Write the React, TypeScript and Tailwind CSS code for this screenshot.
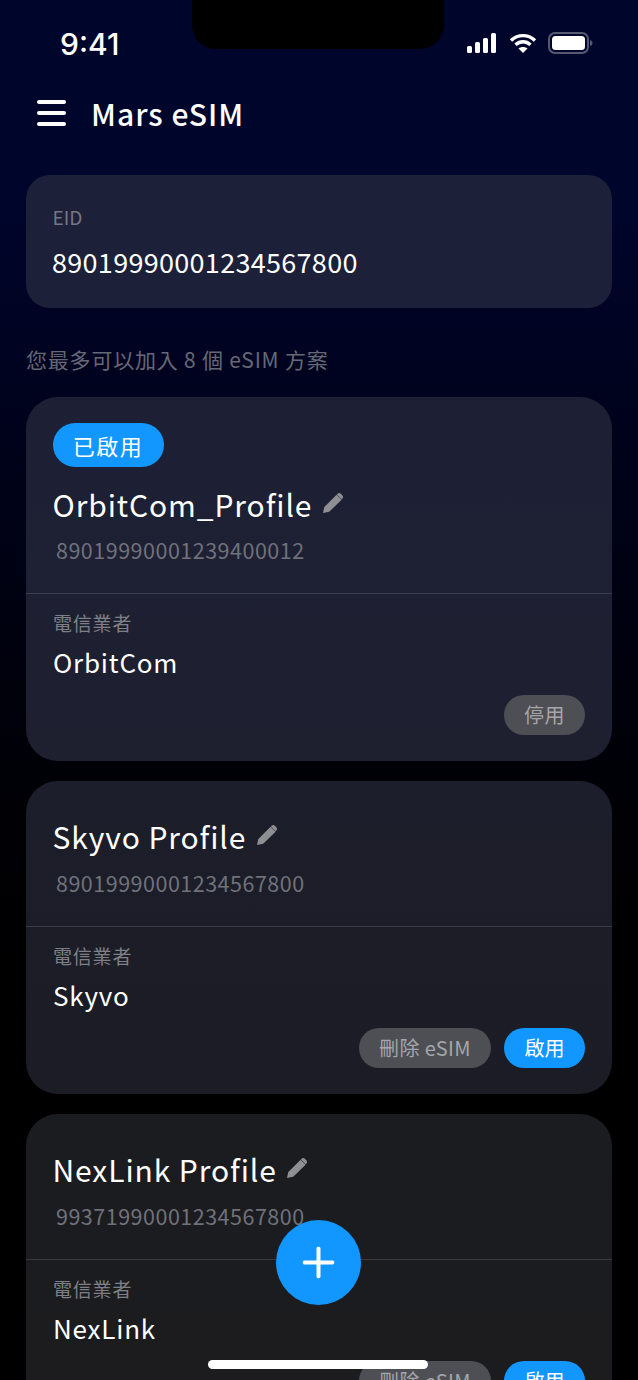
const font = { fontFamily: '"Noto Sans CJK TC", "Noto Sans", sans-serif' };

function Pencil() {
  return (
    <svg width="22" height="22" viewBox="0 0 22 22" className="shrink-0 -translate-y-[1px]">
      <path d="M1 21l1.300-6L14.600 2.700l5 5L7.200 19.800 1 21z" fill="#8e8e93" />
      <path d="M15.800 1.600c.8-.8 2-.8 2.800 0l1.900 1.900c.8.8.8 2 0 2.800l-.9.9-4.700-4.700.9-.9z" fill="#8e8e93" />
    </svg>
  );
}

function Card({ name, number, carrier, badge, buttons, tone }: { name: string; number: string; carrier: string; badge?: boolean; buttons: React.ReactNode; tone: string }) {
  return (
    <section className={`rounded-[32px] bg-gradient-to-b ${tone}`}>
      <div className={`px-[27px] pb-[27px] ${badge ? "pt-[26px]" : "pt-[33px]"}`}>
        {badge && (
          <div className="-ml-[0.500px] mb-[15px] flex h-[44px] w-[111px] items-center justify-center rounded-full bg-[#1296ff] text-[22px] tracking-[1.500px] text-white">已啟用</div>
        )}
        <div className="flex h-[44px] items-center gap-[9px]">
          <span className="-translate-x-[0.500px] text-[30px] leading-[44px] tracking-[0.900px] text-white">{name}</span>
          <Pencil />
        </div>
        <div className={`${badge ? "mt-[8px]" : "mt-[9px]"} pl-[3px] text-[21.500px] leading-[32px] tracking-[0.500px] text-[#70717a]`}>{number}</div>
      </div>
      <div className="h-px bg-white/[0.13]" />
      <div className="px-[27px] pt-[15px] pb-[26px]">
        <div className="text-[19px] leading-[28px] tracking-[0.800px] text-[#7f8087]">電信業者</div>
        <div className="mt-[5px] text-[26px] leading-[40px] tracking-[0.800px] text-white">{carrier}</div>
        <div className="mt-[13px] flex h-[40px] justify-end gap-[13px]">{buttons}</div>
      </div>
    </section>
  );
}

function Gray({ children, w }: { children: React.ReactNode; w: string }) {
  return <button className={`flex h-[40px] ${w} items-center justify-center rounded-full bg-[#4e4f54] text-[20px] tracking-[0.400px] text-[#a5a6aa]`}>{children}</button>;
}
function Blue() {
  return <button className="flex h-[40px] w-[81px] items-center justify-center rounded-full bg-[#1296ff] text-[20px] text-white">啟用</button>;
}

export default function App() {
  return (
    <div style={font} className="relative h-[1380px] w-[638px] overflow-hidden bg-gradient-to-b from-[#00052b] from-[15%] to-black to-[88%]">
      <div className="absolute left-[192px] top-0 h-[49px] w-[252px] rounded-b-[24px] bg-black" />
      <header className="flex h-[88px] items-end justify-between pb-[26px] pl-[60px] pr-[44px]">
        <span style={{ fontFamily: '"Inter", sans-serif' }} className="text-[30px] font-medium leading-[36px] text-white">9:41</span>
        <div className="flex items-center gap-[11px] pb-[8px]">
          <svg width="30" height="20" viewBox="0 0 30 20" fill="#fff">
            <rect x="0" y="13" width="5" height="7" rx="1.500" /><rect x="8" y="9" width="5" height="11" rx="1.500" /><rect x="16" y="5" width="5" height="15" rx="1.500" /><rect x="24" y="0" width="5" height="20" rx="1.500" />
          </svg>
          <svg width="28" height="20" viewBox="0 0 28 20" fill="none" stroke="#fff" strokeWidth="3.400" className="ml-px">
            <path d="M2 7.500C9 1 19 1 26 7.500" /><path d="M6.500 11.700c4.500-4 10.500-4 15 0" />
            <path d="M14 20l-4.500-4.600c2.600-2 6.400-2 9 0z" fill="#fff" stroke="none" />
          </svg>
          <svg width="46" height="22" viewBox="0 0 46 22" fill="none">
            <rect x="1" y="1" width="39" height="20" rx="6" stroke="#555a70" strokeWidth="2" />
            <rect x="4" y="4" width="33" height="14" rx="3.500" fill="#fff" />
            <path d="M42 8c1.500.5 2.500 1.500 2.500 3s-1 2.500-2.500 3z" fill="#555a70" />
          </svg>
        </div>
      </header>
      <div className="flex h-[54px] items-center gap-[25px] pl-[37px]">
        <div className="flex w-[29px] -translate-y-[2px] flex-col gap-[7.500px]">
          <div className="h-[3.500px] rounded-full bg-white" /><div className="h-[3.500px] rounded-full bg-white" /><div className="h-[3.500px] rounded-full bg-white" />
        </div>
        <h1 className="-translate-y-[2px] text-[30px] font-medium leading-[44px] tracking-[1px] text-white">Mars eSIM</h1>
      </div>
      <main className="px-[26px] pt-[33px]">
        <section className="h-[133px] rounded-[24px] bg-[#1c2039] px-[27px] pt-[28px]">
          <div className="-ml-[0.500px] text-[19px] leading-[28px] text-[#747686]">EID</div>
          <div className="-ml-[1px] mt-[12px] text-[27px] leading-[38px] tracking-[0.300px] text-white">89019990001234567800</div>
        </section>
        <p className="mt-[35px] mb-[22px] h-[32px] text-[21px] leading-[32px] tracking-[0.800px] text-[#666876]">您最多可以加入 8 個 eSIM 方案</p>
        <div className="flex flex-col gap-[20px]">
          <Card badge tone="from-[#1d2035] to-[#1e2030]" name="OrbitCom_Profile" number="89019990001239400012" carrier="OrbitCom" buttons={<Gray w="w-[81px]">停用</Gray>} />
          <Card tone="from-[#1c1e2b] to-[#1b1c24]" name="Skyvo Profile" number="89019990001234567800" carrier="Skyvo" buttons={<><Gray w="w-[132px]">刪除 eSIM</Gray><Blue /></>} />
          <Card tone="from-[#1b1c20] to-[#1c1c1e]" name="NexLink Profile" number="99371990001234567800" carrier="NexLink" buttons={<><Gray w="w-[132px]">刪除 eSIM</Gray><Blue /></>} />
        </div>
      </main>
      <button className="absolute left-[276px] top-[1220px] flex h-[85px] w-[85px] items-center justify-center rounded-full bg-[#1296ff]">
        <svg width="32" height="32" viewBox="0 0 32 32" stroke="#fff" strokeWidth="4" strokeLinecap="round" className="-translate-x-[0.500px] -translate-y-[0.500px]"><path d="M16 2v28M2 16h28" /></svg>
      </button>
      <div className="absolute left-[208px] top-[1360px] h-[9px] w-[220px] rounded-full bg-white" />
    </div>
  );
}
